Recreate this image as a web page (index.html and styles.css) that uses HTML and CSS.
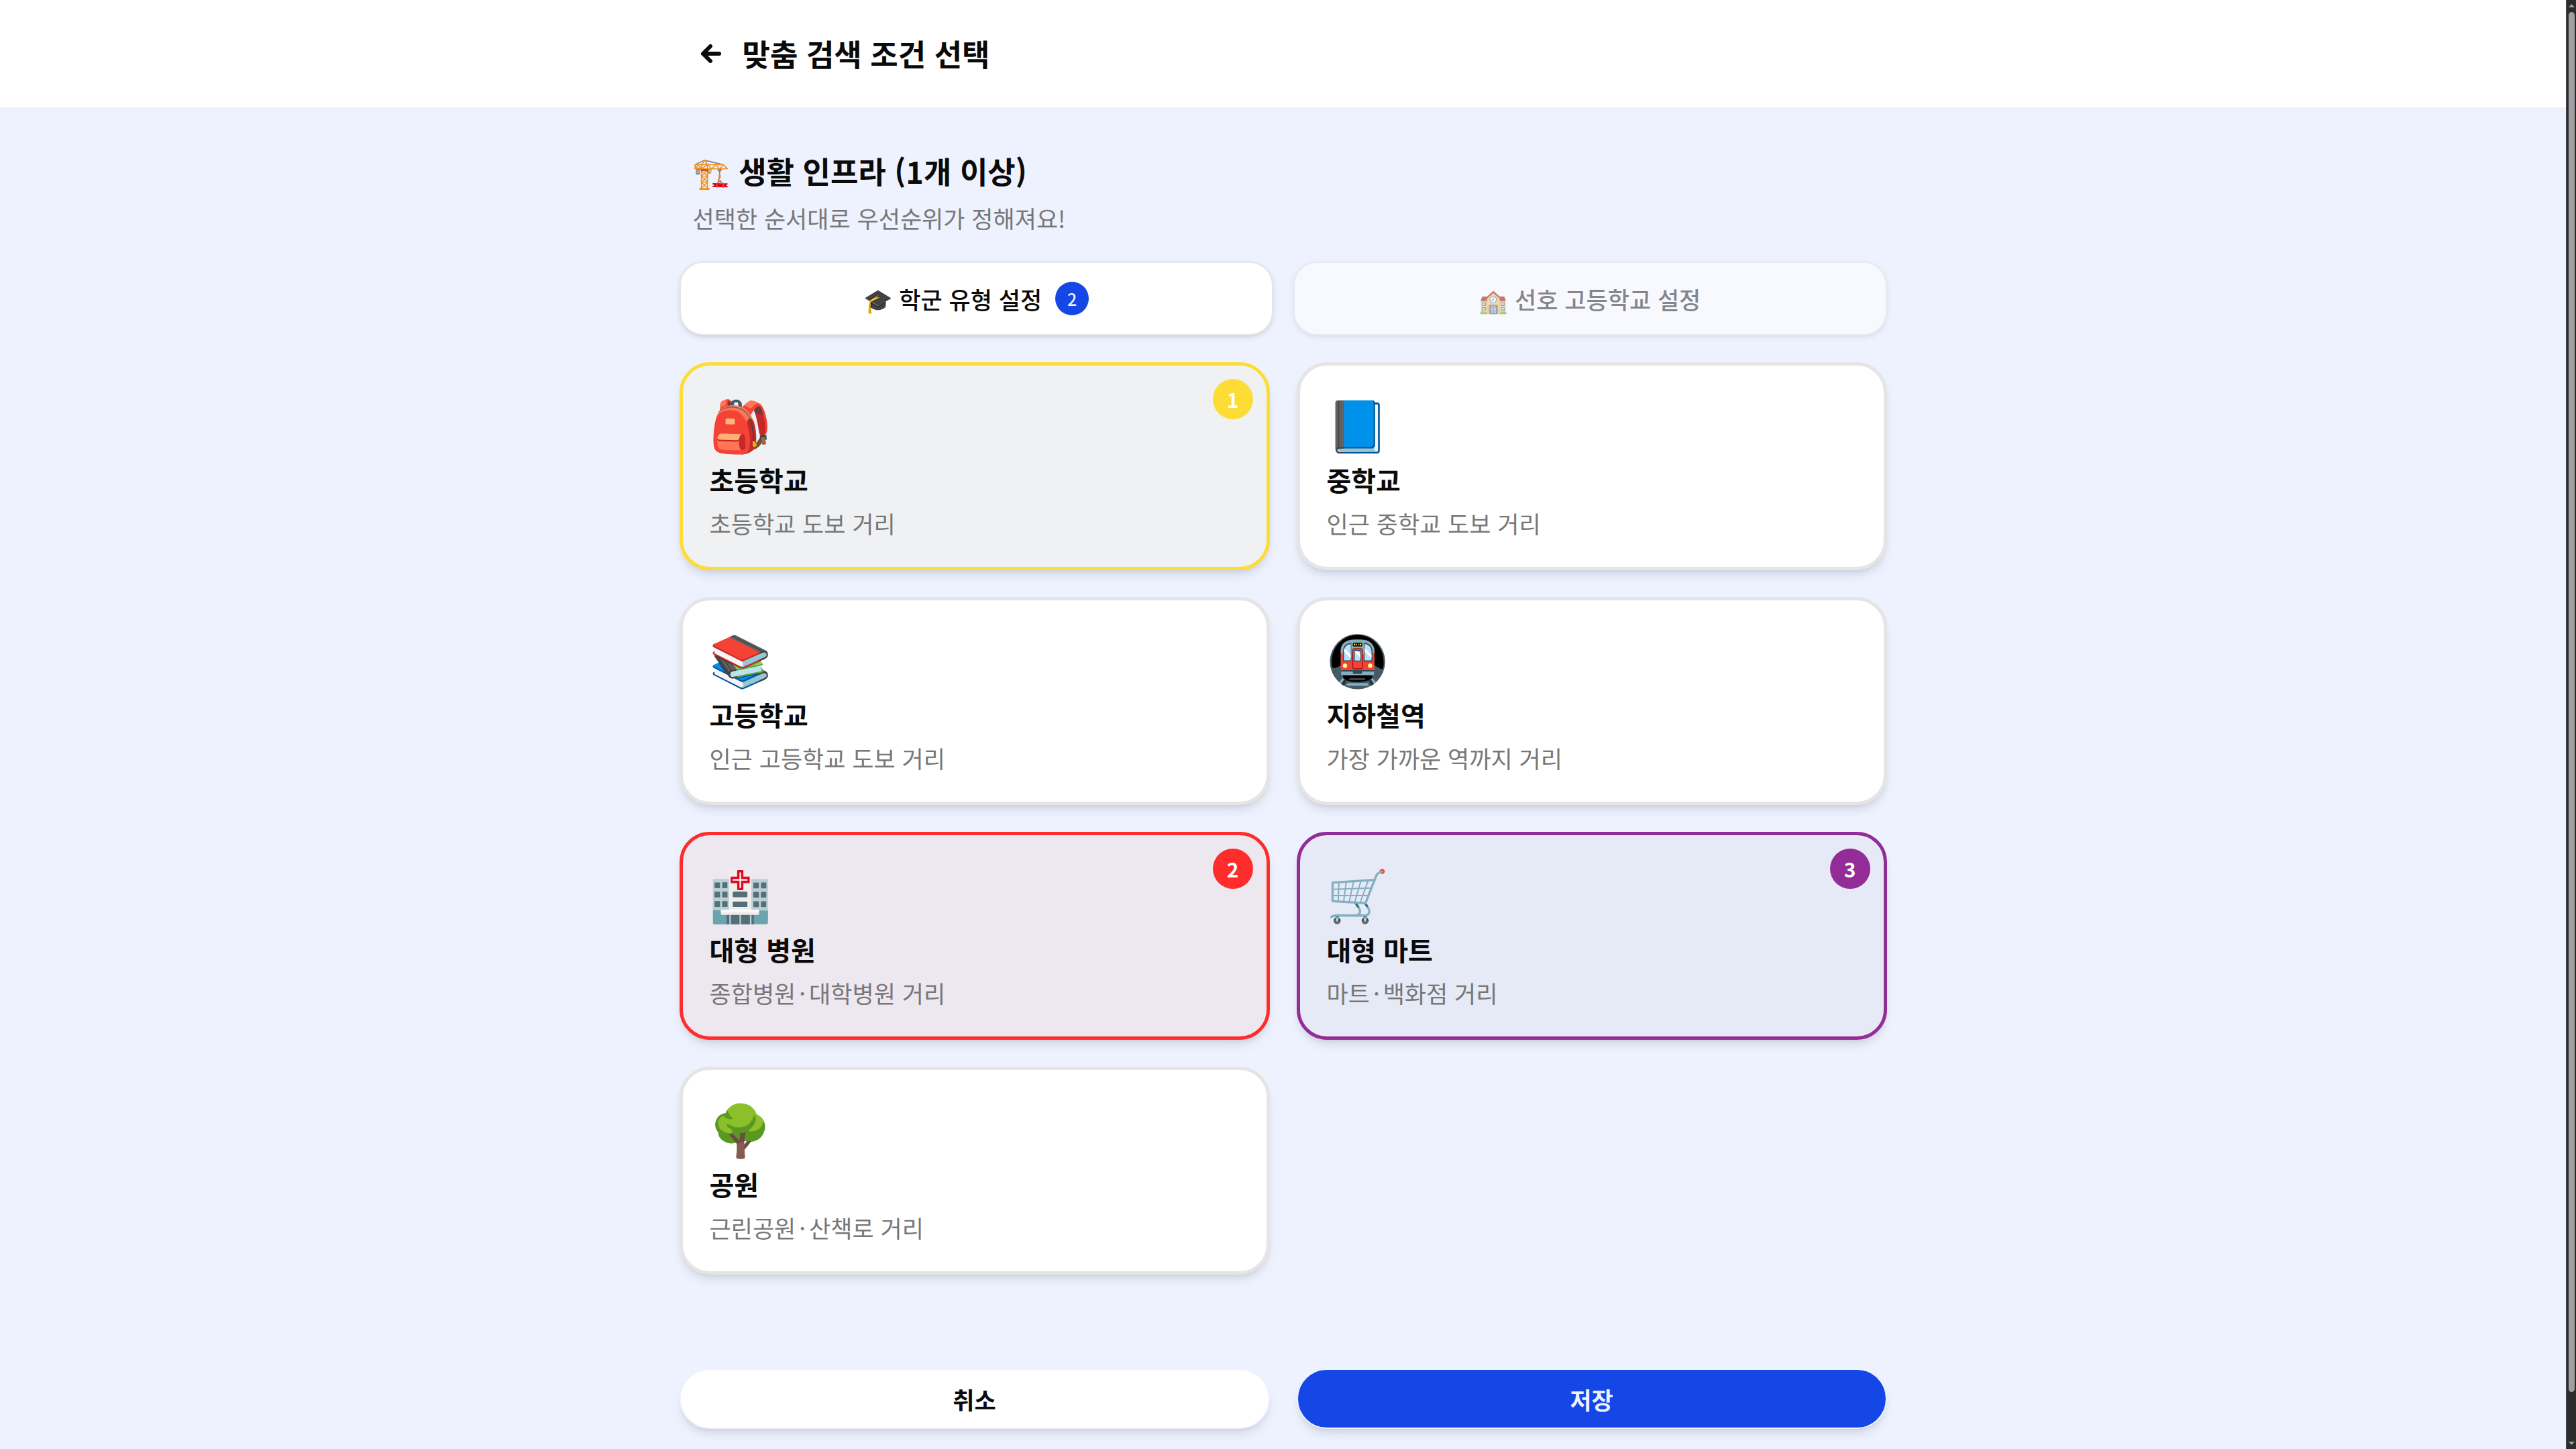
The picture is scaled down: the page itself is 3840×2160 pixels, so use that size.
FILE: index.html
```
<!DOCTYPE html>
<html lang="ko">
<head>
    <meta charset="UTF-8">
    <meta name="viewport" content="width=device-width, initial-scale=1.0">
    <title>맞춤 검색 조건 선택</title>
    <link rel="stylesheet" href="styles.css">
</head>
<body>
    <div class="page">
        <header class="header">
            <div class="container header-inner">
                <button type="button" class="back-btn" aria-label="뒤로">
                    <svg width="30" height="28" viewBox="0 0 30 28" fill="none" stroke="currentColor" stroke-width="6" stroke-linecap="round" stroke-linejoin="round">
                        <path d="M14 3 3 14l11 11M3 14h24"/>
                    </svg>
                </button>
                <h1>맞춤 검색 조건 선택</h1>
            </div>
        </header>

        <main class="container">
            <div class="intro">
                <h2>🏗️ 생활 인프라 (1개 이상)</h2>
                <p>선택한 순서대로 우선순위가 정해져요!</p>
            </div>

            <div class="tabs">
                <button type="button" class="tab">🎓 학군 유형 설정 <span class="count">2</span></button>
                <button type="button" class="tab tab-off">🏫 선호 고등학교 설정</button>
            </div>

            <div class="cards">
                <button type="button" class="card yellow" aria-pressed="true">
                    <span class="emoji">🎒</span>
                    <span class="name">초등학교</span>
                    <span class="desc">초등학교 도보 거리</span>
                    <span class="order">1</span>
                </button>
                <button type="button" class="card" aria-pressed="false">
                    <span class="emoji">📘</span>
                    <span class="name">중학교</span>
                    <span class="desc">인근 중학교 도보 거리</span>
                </button>
                <button type="button" class="card" aria-pressed="false">
                    <span class="emoji">📚</span>
                    <span class="name">고등학교</span>
                    <span class="desc">인근 고등학교 도보 거리</span>
                </button>
                <button type="button" class="card" aria-pressed="false">
                    <span class="emoji">🚇</span>
                    <span class="name">지하철역</span>
                    <span class="desc">가장 가까운 역까지 거리</span>
                </button>
                <button type="button" class="card red" aria-pressed="true">
                    <span class="emoji">🏥</span>
                    <span class="name">대형 병원</span>
                    <span class="desc">종합병원<span class="dot">·</span>대학병원 거리</span>
                    <span class="order">2</span>
                </button>
                <button type="button" class="card purple" aria-pressed="true">
                    <span class="emoji">🛒</span>
                    <span class="name">대형 마트</span>
                    <span class="desc">마트<span class="dot">·</span>백화점 거리</span>
                    <span class="order">3</span>
                </button>
                <button type="button" class="card" aria-pressed="false">
                    <span class="emoji">🌳</span>
                    <span class="name">공원</span>
                    <span class="desc">근린공원<span class="dot">·</span>산책로 거리</span>
                </button>
            </div>

            <div class="actions">
                <button type="button" class="btn">취소</button>
                <button type="button" class="btn btn-save">저장</button>
            </div>
        </main>
    </div>

    <div class="scrollbar" aria-hidden="true">
        <svg width="9" height="5" viewBox="0 0 18 10"><path d="M0 10 9 0l9 10z" fill="#a0a0a0"/></svg>
        <div class="thumb"></div>
        <svg width="9" height="5" viewBox="0 0 18 10"><path d="M0 0h18L9 10z" fill="#a0a0a0"/></svg>
    </div>
</body>
</html>
```

FILE: styles.css
```
* {
    box-sizing: border-box;
}
body {
    display: flex;
    min-height: 100vh;
    margin: 0;
    background-color: #eef2ff;
    color: #0a0a0a;
    font-family: "Noto Sans CJK KR", "Noto Sans", "Noto Color Emoji", sans-serif;
}
h1, h2, p {
    margin: 0;
}
button {
    font-family: inherit;
    color: inherit;
    cursor: pointer;
}
.page {
    flex: 1;
}
.container {
    width: 100%;
    max-width: 1800px;
    margin: 0 auto;
}

/* header */
.header {
    background-color: #fff;
}
.header-inner {
    display: flex;
    align-items: center;
    gap: 10px;
    height: 160px;
    padding: 0 10px;
}
.back-btn {
    display: flex;
    align-items: center;
    justify-content: center;
    width: 74px;
    height: 70px;
    padding: 0;
    border: none;
    background: none;
}
h1, h2 {
    font-size: 45px;
    line-height: 70px;
    font-weight: 700;
}

/* section title */
.intro {
    padding: 60px 20px 0;
}
.intro p {
    font-size: 35px;
    line-height: 50px;
    margin-top: 10px;
    color: #777;
}

/* tabs */
.tabs {
    display: grid;
    grid-template-columns: 1fr 1fr;
    gap: 30px;
    margin-top: 40px;
}
.tab {
    display: flex;
    align-items: center;
    justify-content: center;
    gap: 20px;
    height: 110px;
    border: 2px solid #e5e5e5;
    border-radius: 35px;
    background-color: #fff;
    font-size: 35px;
    font-weight: 500;
    box-shadow: 0 3px 8px rgba(0, 0, 0, 0.1), 0 3px 5px -3px rgba(0, 0, 0, 0.1);
}
.tab-off {
    opacity: 0.6;
    color: #404040;
}
.count {
    width: 50px;
    height: 50px;
    border-radius: 50%;
    background-color: #1447e6;
    color: #eef2ff;
    font-size: 25px;
    line-height: 50px;
    font-weight: 500;
}

/* cards */
.cards {
    display: grid;
    grid-template-columns: 1fr 1fr;
    gap: 40px;
    margin-top: 40px;
}
.card {
    position: relative;
    display: flex;
    flex-direction: column;
    align-items: flex-start;
    height: 310px;
    padding: 40px;
    border: 5px solid #e5e5e5;
    border-radius: 45px;
    background-color: #fff;
    text-align: left;
    box-shadow: 0 10px 15px -3px rgba(0, 0, 0, 0.1), 0 5px 10px -5px rgba(0, 0, 0, 0.1);
}
.emoji {
    margin-bottom: 10px;
    font-size: 75px;
    line-height: 90px;
}
.name {
    font-size: 40px;
    line-height: 60px;
    font-weight: 700;
}
.desc {
    margin-top: 10px;
    font-size: 35px;
    line-height: 50px;
    color: #777;
}
.dot {
    margin: 0 5px;
}
.order {
    position: absolute;
    top: 20px;
    right: 20px;
    width: 60px;
    height: 60px;
    border-radius: 50%;
    color: #fff;
    font-size: 30px;
    line-height: 60px;
    font-weight: 700;
    text-align: center;
}
.yellow {
    border-color: #fddd35;
    background-color: #eff1f3;
}
.yellow .order {
    background-color: #fddd35;
}
.red {
    border-color: #ff2c2c;
    background-color: #ede7f0;
}
.red .order {
    background-color: #ff2c2c;
}
.purple {
    border-color: #932c96;
    background-color: #e6e9f6;
}
.purple .order {
    background-color: #932c96;
}

/* bottom buttons */
.actions {
    display: grid;
    grid-template-columns: 1fr 1fr;
    gap: 40px;
    margin-top: 140px;
    padding-bottom: 30px;
}
.btn {
    height: 90px;
    border: 2px solid #eef2ff;
    border-radius: 45px;
    background-color: #fff;
    font-size: 35px;
    font-weight: 700;
    box-shadow: 0 10px 15px -3px rgba(0, 0, 0, 0.1), 0 5px 10px -5px rgba(0, 0, 0, 0.1);
}
.btn-save {
    background-color: #1447e6;
    color: #eef2ff;
}

/* scrollbar */
.scrollbar {
    position: sticky;
    top: 0;
    display: flex;
    flex-direction: column;
    align-items: center;
    gap: 7px;
    width: 15px;
    height: 100vh;
    padding: 6px 0;
    border-left: 1px solid #4a4a52;
    background-color: #2c2c2c;
}
.scrollbar svg {
    flex: none;
}
.thumb {
    width: 9px;
    height: calc(100% - 91px);
    margin-bottom: auto;
    border-radius: 5px;
    background-color: #a0a0a0;
}
```
